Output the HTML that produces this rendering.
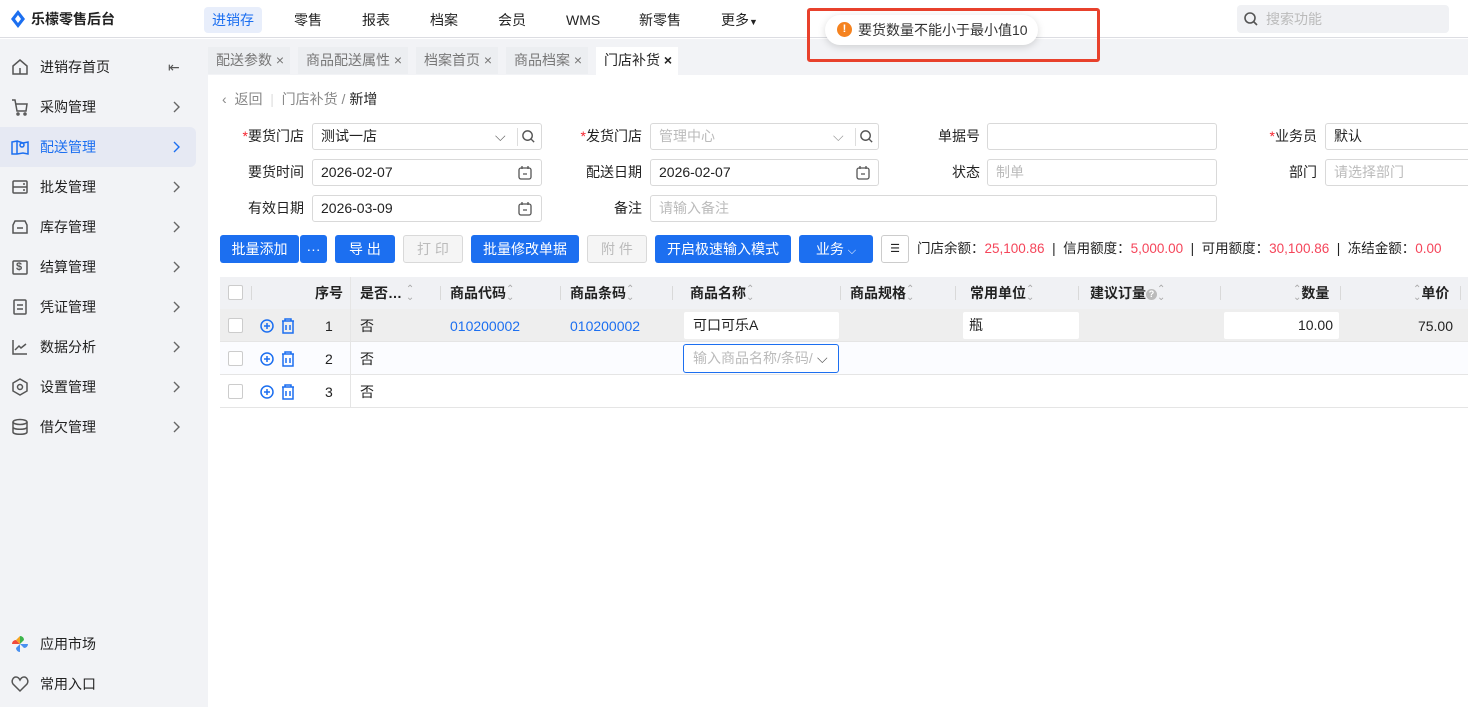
<!DOCTYPE html>
<html><head><meta charset="utf-8">
<style>
*{box-sizing:border-box;margin:0;padding:0}
body{width:1468px;height:707px;overflow:hidden;position:relative;background:#fff;font-family:"Liberation Sans","Noto Sans CJK SC",sans-serif;font-size:14px;color:#222}
.a{position:absolute;white-space:nowrap}
.hdr{left:0;top:0;width:1468px;height:38px;background:#fff;border-bottom:1px solid #dcdde2}
.nav{top:7px;height:26px;line-height:26px;font-size:14px;color:#222}
.side{left:0;top:39px;width:208px;height:668px;background:#f2f3f6}
.mi{left:0;width:196px;height:40px;line-height:40px;font-size:14px}
.mi .t{position:absolute;left:40px}
.mi svg{position:absolute;left:11px;top:11px}
.mi svg.ch{left:172px;top:14px}
.tabbar{left:208px;top:39px;width:1260px;height:36px;background:#f2f3f6}
.tab{top:47px;height:27px;line-height:27px;background:#eceef1;color:#777;font-size:14px;padding:0 6px 0 8px}
.lbl{font-size:14px;text-align:right;height:27px;line-height:27px}
.in{border:1px solid #d9d9d9;border-radius:3px;height:27px;line-height:25px;padding-left:8px;font-size:14px;background:#fff}
.ph{color:#bbb}
.req{color:#f5222d}
.btn{top:235px;height:28px;line-height:28px;background:#1c6ff0;color:#fff;border-radius:3px;text-align:center;font-size:14px}
.btnd{background:#f5f5f5;color:#bbb;border:1px solid #d9d9d9;line-height:26px}
.th{top:277px;height:32px;line-height:32px;font-weight:bold;font-size:14px}
.sep{width:1px;height:14px;background:#d9d9d9;top:286px}
.cb{width:15px;height:15px;border:1px solid #ccc;background:#fff;border-radius:2px}
.blue{color:#1c6ff0}
.red{color:#f5455a}
.so{color:#aaa;font-weight:normal;font-size:10px;display:inline-block;line-height:8px;vertical-align:middle;text-align:center}
.z{z-index:10}
</style></head><body>
<div class="a hdr"></div>
<svg class="a" style="left:10px;top:10px" width="16" height="18" viewBox="0 0 16 18"><path d="M8 0 L15 9 L8 18 L1 9 Z" fill="#1c6ff0"/><path d="M8 5 L11 9 L8 13 L5 9Z" fill="#fff"/></svg>
<div class="a" style="left:31px;top:9px;font-size:14px;font-weight:bold;line-height:20px">乐檬零售后台</div>
<div class="a nav" style="left:204px;width:58px;background:#e8eefb;border-radius:4px;color:#1c6ff0;text-align:center">进销存</div>
<div class="a nav" style="left:294px">零售</div>
<div class="a nav" style="left:362px">报表</div>
<div class="a nav" style="left:430px">档案</div>
<div class="a nav" style="left:498px">会员</div>
<div class="a nav" style="left:566px">WMS</div>
<div class="a nav" style="left:639px">新零售</div>
<div class="a nav" style="left:721px">更多<span style="font-size:9px">▼</span></div>
<div class="a" style="left:1237px;top:5px;width:212px;height:28px;background:#f0f1f4;border-radius:4px"></div>
<svg class="a" style="left:1243px;top:11px" width="16" height="16" viewBox="0 0 16 16"><circle cx="7" cy="7" r="5" fill="none" stroke="#555" stroke-width="1.6"/><path d="M11 11 L14 14" stroke="#555" stroke-width="1.6"/></svg>
<div class="a" style="left:1266px;top:9px;color:#bbb;line-height:20px">搜索功能</div>

<div class="a side"></div>
<div class="a mi" style="top:47px"><svg width="18" height="18" viewBox="0 0 18 18" fill="none" stroke="#555" stroke-width="1.5"><path d="M2 8 L9 2 L16 8 V16 H2Z"/><path d="M9 10 V16"/></svg><span class="t">进销存首页</span><span class="a" style="left:168px;top:0;color:#555">⇤</span></div>
<div class="a mi" style="top:87px"><svg width="18" height="18" viewBox="0 0 18 18" fill="none" stroke="#555" stroke-width="1.5"><path d="M1 2 H4 L6 13 H15 L16 6 H5"/><circle cx="7" cy="16" r="1"/><circle cx="14" cy="16" r="1"/></svg><span class="t">采购管理</span><svg class="ch" width="8" height="12" viewBox="0 0 8 12" fill="none" stroke="#666" stroke-width="1.4"><path d="M2 1 L7 6 L2 11"/></svg></div>
<div class="a mi" style="top:127px;background:#e6e9f3;border-radius:0 6px 6px 0;color:#1c6ff0"><svg width="18" height="18" viewBox="0 0 18 18" fill="none" stroke="#1c6ff0" stroke-width="1.5"><path d="M1 4 L6 3 V16 L1 16Z M6 3 L12 5 L17 4 V16 L12 15 L6 16"/><circle cx="11" cy="7" r="2"/></svg><span class="t">配送管理</span><svg class="ch" width="8" height="12" viewBox="0 0 8 12" fill="none" stroke="#1c6ff0" stroke-width="1.4"><path d="M2 1 L7 6 L2 11"/></svg></div>
<div class="a mi" style="top:167px"><svg width="18" height="18" viewBox="0 0 18 18" fill="none" stroke="#555" stroke-width="1.5"><rect x="2" y="3" width="14" height="12" rx="1"/><path d="M2 9 H16 M12 6 H14 M12 12 H14"/></svg><span class="t">批发管理</span><svg class="ch" width="8" height="12" viewBox="0 0 8 12" fill="none" stroke="#666" stroke-width="1.4"><path d="M2 1 L7 6 L2 11"/></svg></div>
<div class="a mi" style="top:207px"><svg width="18" height="18" viewBox="0 0 18 18" fill="none" stroke="#555" stroke-width="1.5"><path d="M4 3 H14 L16 7 V15 H2 V7Z"/><path d="M6 10 H12"/></svg><span class="t">库存管理</span><svg class="ch" width="8" height="12" viewBox="0 0 8 12" fill="none" stroke="#666" stroke-width="1.4"><path d="M2 1 L7 6 L2 11"/></svg></div>
<div class="a mi" style="top:247px"><svg width="18" height="18" viewBox="0 0 18 18" fill="none" stroke="#555" stroke-width="1.5"><rect x="2" y="3" width="14" height="13" rx="1"/></svg><span class="a" style="left:16px;top:0;font-size:11px;font-weight:bold;color:#555">$</span><span class="t">结算管理</span><svg class="ch" width="8" height="12" viewBox="0 0 8 12" fill="none" stroke="#666" stroke-width="1.4"><path d="M2 1 L7 6 L2 11"/></svg></div>
<div class="a mi" style="top:287px"><svg width="18" height="18" viewBox="0 0 18 18" fill="none" stroke="#555" stroke-width="1.5"><rect x="3" y="2" width="12" height="14" rx="1"/><path d="M6 7 H12 M6 11 H12"/></svg><span class="t">凭证管理</span><svg class="ch" width="8" height="12" viewBox="0 0 8 12" fill="none" stroke="#666" stroke-width="1.4"><path d="M2 1 L7 6 L2 11"/></svg></div>
<div class="a mi" style="top:327px"><svg width="18" height="18" viewBox="0 0 18 18" fill="none" stroke="#555" stroke-width="1.5"><path d="M2 2 V16 H16"/><path d="M4 12 L8 8 L10 10 L15 6"/></svg><span class="t">数据分析</span><svg class="ch" width="8" height="12" viewBox="0 0 8 12" fill="none" stroke="#666" stroke-width="1.4"><path d="M2 1 L7 6 L2 11"/></svg></div>
<div class="a mi" style="top:367px"><svg width="18" height="18" viewBox="0 0 18 18" fill="none" stroke="#555" stroke-width="1.5"><path d="M9 1 L16 5 V13 L9 17 L2 13 V5Z"/><circle cx="9" cy="9" r="2.5"/></svg><span class="t">设置管理</span><svg class="ch" width="8" height="12" viewBox="0 0 8 12" fill="none" stroke="#666" stroke-width="1.4"><path d="M2 1 L7 6 L2 11"/></svg></div>
<div class="a mi" style="top:407px"><svg width="18" height="18" viewBox="0 0 18 18" fill="none" stroke="#555" stroke-width="1.5"><ellipse cx="9" cy="4" rx="7" ry="2.5"/><path d="M2 4 V14 C2 17 16 17 16 14 V4 M2 9 C2 12 16 12 16 9"/></svg><span class="t">借欠管理</span><svg class="ch" width="8" height="12" viewBox="0 0 8 12" fill="none" stroke="#666" stroke-width="1.4"><path d="M2 1 L7 6 L2 11"/></svg></div>
<div class="a mi" style="top:624px"><svg width="18" height="18" viewBox="0 0 18 18"><path d="M9 9 L9 1 A4 4 0 0 1 13 5Z" fill="#3cb44b"/><path d="M9 9 L17 9 A4 4 0 0 1 13 13Z" fill="#4a90f0"/><path d="M9 9 L9 17 A4 4 0 0 1 5 13Z" fill="#4a90f0"/><path d="M9 9 L1 9 A4 4 0 0 1 5 5Z" fill="#f04a3c"/><path d="M9 9 L5 5 L9 1Z" fill="#f5a623"/></svg><span class="t">应用市场</span></div>
<div class="a mi" style="top:664px"><svg width="18" height="18" viewBox="0 0 18 18" fill="none" stroke="#555" stroke-width="1.5"><path d="M9 16 L2 9 C0 6 2 2 5 2 C7 2 8 3 9 5 C10 3 11 2 13 2 C16 2 18 6 16 9Z"/></svg><span class="t">常用入口</span></div>

<div class="a tabbar"></div>
<div class="a tab" style="left:208px">配送参数 ×</div>
<div class="a tab" style="left:298px">商品配送属性 ×</div>
<div class="a tab" style="left:416px">档案首页 ×</div>
<div class="a tab" style="left:506px">商品档案 ×</div>
<div class="a tab" style="left:596px;background:#fff;color:#222;height:28px">门店补货 <b>×</b></div>

<div class="a" style="left:222px;top:90px;line-height:18px;color:#888">‹&nbsp; 返回 &nbsp;<span style="color:#ddd">|</span>&nbsp; 门店补货 / <span style="color:#222">新增</span></div>

<div class="a lbl" style="left:220px;top:123px;width:84px"><span class="req">*</span>要货门店</div>
<div class="a in" style="left:312px;top:123px;width:230px">测试一店<span class="a" style="left:182px;top:0;color:#666">⌵</span><span class="a" style="left:204px;top:4px;height:18px;border-left:1px solid #ddd"></span></div>
<svg class="a" style="left:521px;top:129px" width="15" height="15" viewBox="0 0 16 16"><circle cx="7" cy="7" r="5" fill="none" stroke="#555" stroke-width="1.5"/><path d="M11 11 L14 14" stroke="#555" stroke-width="1.5"/></svg>
<div class="a lbl" style="left:560px;top:123px;width:82px"><span class="req">*</span>发货门店</div>
<div class="a in ph" style="left:650px;top:123px;width:229px">管理中心<span class="a" style="left:182px;top:0;color:#999">⌵</span><span class="a" style="left:204px;top:4px;height:18px;border-left:1px solid #ddd"></span></div>
<svg class="a" style="left:859px;top:129px" width="15" height="15" viewBox="0 0 16 16"><circle cx="7" cy="7" r="5" fill="none" stroke="#555" stroke-width="1.5"/><path d="M11 11 L14 14" stroke="#555" stroke-width="1.5"/></svg>
<div class="a lbl" style="left:900px;top:123px;width:80px">单据号</div>
<div class="a in" style="left:987px;top:123px;width:230px"></div>
<div class="a lbl" style="left:1230px;top:123px;width:87px"><span class="req">*</span>业务员</div>
<div class="a in" style="left:1325px;top:123px;width:160px">默认</div>
<div class="a lbl" style="left:220px;top:159px;width:84px">要货时间</div>
<div class="a in" style="left:312px;top:159px;width:230px">2026-02-07</div>
<div class="a lbl" style="left:560px;top:159px;width:82px">配送日期</div>
<div class="a in" style="left:650px;top:159px;width:229px">2026-02-07</div>
<div class="a lbl" style="left:900px;top:159px;width:80px">状态</div>
<div class="a in ph" style="left:987px;top:159px;width:230px">制单</div>
<div class="a lbl" style="left:1230px;top:159px;width:87px">部门</div>
<div class="a in ph" style="left:1325px;top:159px;width:160px">请选择部门</div>
<div class="a lbl" style="left:220px;top:195px;width:84px">有效日期</div>
<div class="a in" style="left:312px;top:195px;width:230px">2026-03-09</div>
<div class="a lbl" style="left:560px;top:195px;width:82px">备注</div>
<div class="a in ph" style="left:650px;top:195px;width:567px">请输入备注</div>
<svg class="a" style="left:518px;top:165px" width="14" height="15" viewBox="0 0 14 15" fill="none" stroke="#555" stroke-width="1.3"><rect x="1" y="3" width="12" height="11" rx="2"/><path d="M4 1 V4 M10 1 V4 M5 9 H9"/></svg>
<svg class="a" style="left:518px;top:201px" width="14" height="15" viewBox="0 0 14 15" fill="none" stroke="#555" stroke-width="1.3"><rect x="1" y="3" width="12" height="11" rx="2"/><path d="M4 1 V4 M10 1 V4 M5 9 H9"/></svg>
<svg class="a" style="left:856px;top:165px" width="14" height="15" viewBox="0 0 14 15" fill="none" stroke="#555" stroke-width="1.3"><rect x="1" y="3" width="12" height="11" rx="2"/><path d="M4 1 V4 M10 1 V4 M5 9 H9"/></svg>

<div class="a btn" style="left:220px;width:79px">批量添加</div>
<div class="a btn" style="left:300px;width:27px">···</div>
<div class="a btn" style="left:335px;width:60px">导 出</div>
<div class="a btn btnd" style="left:403px;width:60px">打 印</div>
<div class="a btn" style="left:471px;width:108px">批量修改单据</div>
<div class="a btn btnd" style="left:587px;width:60px">附 件</div>
<div class="a btn" style="left:655px;width:136px">开启极速输入模式</div>
<div class="a btn" style="left:799px;width:74px">业务 <span style="font-size:11px">⌵</span></div>
<div class="a" style="left:881px;top:235px;width:28px;height:28px;border:1px solid #ccc;border-radius:3px;text-align:center;line-height:26px;font-size:11px">☰</div>
<div class="a" style="left:917px;top:240px;line-height:18px;font-size:13.5px">门店余额：<span class="red">25,100.86</span> &nbsp;|&nbsp; 信用额度：<span class="red">5,000.00</span> &nbsp;|&nbsp; 可用额度：<span class="red">30,100.86</span> &nbsp;|&nbsp; 冻结金额：<span class="red">0.00</span></div>

<div class="a" style="left:220px;top:277px;width:1248px;height:32px;background:#f0f1f4"></div>
<div class="a" style="left:220px;top:309px;width:1248px;height:33px;background:#eeeeee;border-bottom:1px solid #e5e5e5"></div>
<div class="a" style="left:220px;top:342px;width:1248px;height:33px;background:#fbfcff;border-bottom:1px solid #e5e5e5"></div>
<div class="a" style="left:220px;top:375px;width:1248px;height:33px;border-bottom:1px solid #e5e5e5"></div>
<div class="a" style="left:350px;top:277px;width:1px;height:131px;background:#e5e5e5"></div>
<div class="a cb" style="left:228px;top:285px"></div>
<div class="a sep" style="left:251px"></div>
<div class="a th" style="left:315px">序号</div>
<div class="a th" style="left:360px">是否… <span class="so">⌃<br>⌄</span></div>
<div class="a sep" style="left:440px"></div>
<div class="a th" style="left:450px">商品代码<span class="so">⌃<br>⌄</span></div>
<div class="a sep" style="left:560px"></div>
<div class="a th" style="left:570px">商品条码<span class="so">⌃<br>⌄</span></div>
<div class="a sep" style="left:672px"></div>
<div class="a th" style="left:690px">商品名称<span class="so">⌃<br>⌄</span></div>
<div class="a sep" style="left:840px"></div>
<div class="a th" style="left:850px">商品规格<span class="so">⌃<br>⌄</span></div>
<div class="a sep" style="left:955px"></div>
<div class="a th" style="left:970px">常用单位<span class="so">⌃<br>⌄</span></div>
<div class="a sep" style="left:1078px"></div>
<div class="a th" style="left:1090px">建议订量<span style="display:inline-block;width:11px;height:11px;border-radius:50%;background:#bbb;color:#fff;font-size:9px;line-height:11px;text-align:center;vertical-align:1px">?</span><span class="so">⌃<br>⌄</span></div>
<div class="a sep" style="left:1220px"></div>
<div class="a th" style="left:1293px"><span class="so">⌃<br>⌄</span>数量</div>
<div class="a sep" style="left:1340px"></div>
<div class="a th" style="left:1413px"><span class="so">⌃<br>⌄</span>单价</div>
<div class="a sep" style="left:1460px"></div>

<div class="a cb" style="left:228px;top:318px"></div>
<div class="a cb" style="left:228px;top:351px"></div>
<div class="a cb" style="left:228px;top:384px"></div>
<svg class="a" style="left:259px;top:318px" width="40" height="16" viewBox="0 0 40 16" fill="none" stroke="#1c6ff0" stroke-width="1.5"><circle cx="8" cy="8" r="6"/><path d="M8 5 V11 M5 8 H11"/><path d="M23 3 H35 M26 3 V1 H32 V3 M24 3 V15 H34 V3 M27 7 V12 M31 7 V12"/></svg>
<svg class="a" style="left:259px;top:351px" width="40" height="16" viewBox="0 0 40 16" fill="none" stroke="#1c6ff0" stroke-width="1.5"><circle cx="8" cy="8" r="6"/><path d="M8 5 V11 M5 8 H11"/><path d="M23 3 H35 M26 3 V1 H32 V3 M24 3 V15 H34 V3 M27 7 V12 M31 7 V12"/></svg>
<svg class="a" style="left:259px;top:384px" width="40" height="16" viewBox="0 0 40 16" fill="none" stroke="#1c6ff0" stroke-width="1.5"><circle cx="8" cy="8" r="6"/><path d="M8 5 V11 M5 8 H11"/><path d="M23 3 H35 M26 3 V1 H32 V3 M24 3 V15 H34 V3 M27 7 V12 M31 7 V12"/></svg>
<div class="a" style="left:325px;top:317px;line-height:18px">1</div>
<div class="a" style="left:325px;top:350px;line-height:18px">2</div>
<div class="a" style="left:325px;top:383px;line-height:18px">3</div>
<div class="a" style="left:360px;top:317px;line-height:18px">否</div>
<div class="a" style="left:360px;top:350px;line-height:18px">否</div>
<div class="a" style="left:360px;top:383px;line-height:18px">否</div>
<div class="a blue" style="left:450px;top:317px;line-height:18px">010200002</div>
<div class="a blue" style="left:570px;top:317px;line-height:18px">010200002</div>
<div class="a" style="left:684px;top:312px;width:155px;height:27px;background:#fff;border-radius:2px;padding-left:9px;line-height:27px">可口可乐A</div>
<div class="a" style="left:683px;top:344px;width:156px;height:29px;background:#fff;border:1px solid #1c6ff0;border-radius:3px;padding-left:9px;line-height:27px;color:#bbb">输入商品名称/条码/<span class="a" style="left:133px;top:0;color:#555">⌵</span></div>
<div class="a" style="left:963px;top:312px;width:116px;height:27px;background:#fff;border-radius:2px;padding-left:6px;line-height:27px">瓶</div>
<div class="a" style="left:1224px;top:312px;width:115px;height:27px;background:#fff;border-radius:2px;padding-right:6px;text-align:right;line-height:27px">10.00</div>
<div class="a" style="left:1380px;top:317px;width:73px;text-align:right;line-height:18px">75.00</div>

<!-- toast on top -->
<div class="a z" style="left:807px;top:8px;width:293px;height:54px;border:3px solid #e8412c;border-radius:3px"></div>
<div class="a z" style="left:825px;top:15px;width:213px;height:30px;background:#fff;border-radius:15px;box-shadow:0 2px 8px rgba(0,0,0,.15)"></div>
<div class="a z" style="left:837px;top:22px;width:15px;height:15px;border-radius:50%;background:#f5821f;color:#fff;font-size:11px;font-weight:bold;text-align:center;line-height:15px">!</div>
<div class="a z" style="left:858px;top:20px;line-height:20px;font-size:14px;color:#333">要货数量不能小于最小值10</div>
</body></html>
